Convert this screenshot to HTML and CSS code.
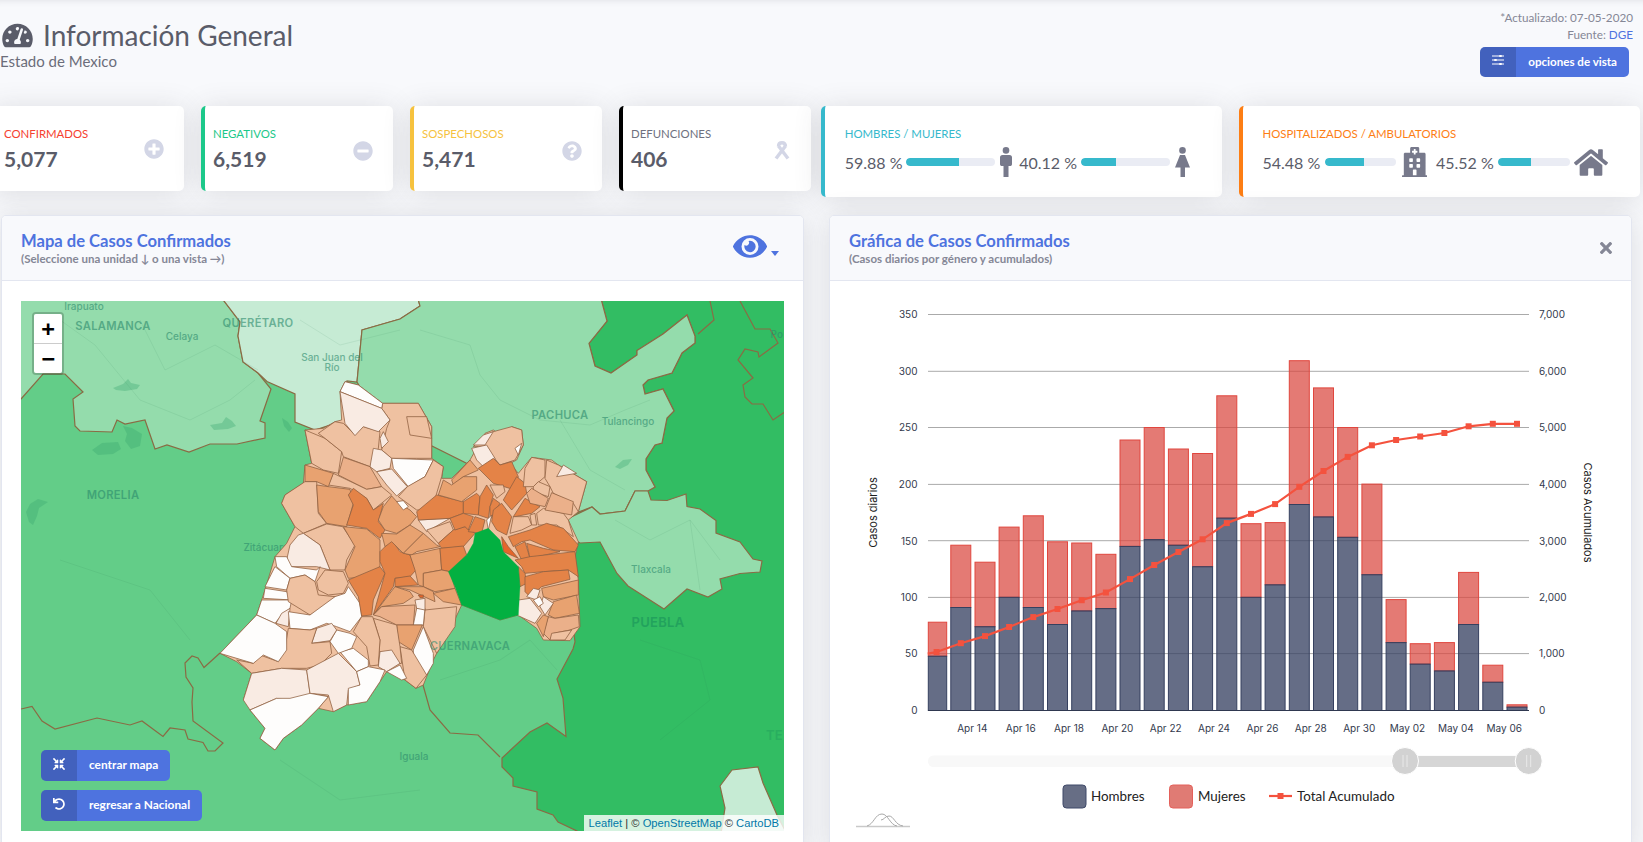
FILE: index.html
```html
<!DOCTYPE html>
<html lang="es">
<head>
<meta charset="utf-8">
<title>Información General</title>
<link rel="stylesheet" href="styles.css">
</head>
<body>
<header class="top">
  <div class="top-left">
    <div class="title-row">
      <svg class="gauge" viewBox="0 20 576 472"><path d="M288 32C128.94 32 0 160.94 0 320c0 52.8 14.25 102.26 39.06 144.8 5.61 9.62 16.3 15.2 27.44 15.2h443c11.14 0 21.83-5.58 27.44-15.2C561.75 422.26 576 372.8 576 320c0-159.06-128.94-288-288-288zm0 64c14.71 0 26.58 10.13 30.32 23.65-1.11 2.26-2.64 4.23-3.45 6.67l-9.22 27.67c-5.13 3.49-10.97 6.01-17.64 6.01-17.67 0-32-14.33-32-32S270.33 96 288 96zM96 384c-17.67 0-32-14.33-32-32s14.33-32 32-32 32 14.33 32 32-14.33 32-32 32zm48-160c-17.67 0-32-14.33-32-32s14.33-32 32-32 32 14.33 32 32-14.33 32-32 32zm246.77-72.41l-61.33 184C343.13 347.33 352 364.54 352 384c0 11.72-3.38 22.55-8.88 32H232.88c-5.5-9.45-8.88-20.28-8.88-32 0-33.94 26.5-61.43 59.9-63.59l61.34-184.01c4.17-12.56 17.73-19.45 30.36-15.17 12.57 4.19 19.35 17.77 15.17 30.36zm14.66 57.2l15.52-46.55c3.47-1.29 7.13-2.23 11.05-2.23 17.67 0 32 14.33 32 32s-14.33 32-32 32c-11.38-.01-20.89-6.28-26.57-15.22zM480 384c-17.67 0-32-14.33-32-32s14.33-32 32-32 32 14.33 32 32-14.33 32-32 32z"/></svg>
      <h1>Información General</h1>
    </div>
    <div class="subtitle">Estado de Mexico</div>
  </div>
  <div class="top-right">
    <div class="meta">*Actualizado: 07-05-2020</div>
    <div class="meta">Fuente: <a href="#">DGE</a></div>
    <a class="btn btn-opts" href="#">
      <span class="btn-ico"><svg viewBox="0 0 12 10" class="ico-sliders"><path class="sl-l" d="M0 1h12M0 5h12M0 9h12"/><path class="sl-t" d="M8.500 0v2M3.500 4v2M8.500 8v2"/></svg></span>
      <span class="btn-txt">opciones de vista</span>
    </a>
  </div>
</header>

<section class="stats">
  <article class="stat small s-red">
    <div class="stat-text"><div class="stat-label">CONFIRMADOS</div><div class="stat-value">5,077</div></div>
    <svg class="stat-ico up" viewBox="0 0 512 512"><path d="M256 8C119 8 8 119 8 256s111 248 248 248 248-111 248-248S393 8 256 8zm144 276c0 6.6-5.4 12-12 12h-92v92c0 6.6-5.4 12-12 12h-56c-6.6 0-12-5.4-12-12v-92h-92c-6.6 0-12-5.4-12-12v-56c0-6.6 5.4-12 12-12h92v-92c0-6.6 5.4-12 12-12h56c6.6 0 12 5.4 12 12v92h92c6.6 0 12 5.4 12 12v56z"/></svg>
  </article>
  <article class="stat small s-green">
    <div class="stat-text"><div class="stat-label">NEGATIVOS</div><div class="stat-value">6,519</div></div>
    <svg class="stat-ico" viewBox="0 0 512 512"><path d="M256 8C119 8 8 119 8 256s111 248 248 248 248-111 248-248S393 8 256 8zM124 296c-6.6 0-12-5.4-12-12v-56c0-6.6 5.4-12 12-12h264c6.6 0 12 5.4 12 12v56c0 6.6-5.4 12-12 12H124z"/></svg>
  </article>
  <article class="stat small s-yellow">
    <div class="stat-text"><div class="stat-label">SOSPECHOSOS</div><div class="stat-value">5,471</div></div>
    <svg class="stat-ico" viewBox="0 0 512 512"><path d="M504 256c0 136.997-111.043 248-248 248S8 392.997 8 256C8 119.083 119.043 8 256 8s248 111.083 248 248zM262.655 90c-54.497 0-89.255 22.957-116.549 63.758-3.536 5.286-2.353 12.415 2.715 16.258l34.699 26.31c5.205 3.947 12.621 3.008 16.665-2.122 17.864-22.658 30.113-35.797 57.303-35.797 20.429 0 45.698 13.148 45.698 32.958 0 14.976-12.363 22.667-32.534 33.976C247.128 238.528 216 254.941 216 296v4c0 6.627 5.373 12 12 12h56c6.627 0 12-5.373 12-12v-1.333c0-28.462 83.186-29.647 83.186-106.667 0-58.002-60.165-102-116.531-102zM256 338c-25.365 0-46 20.635-46 46 0 25.364 20.635 46 46 46s46-20.636 46-46c0-25.365-20.635-46-46-46z"/></svg>
  </article>
  <article class="stat small s-black">
    <div class="stat-text"><div class="stat-label">DEFUNCIONES</div><div class="stat-value">406</div></div>
    <svg class="stat-ico ribbon" viewBox="0 0 18 20"><path d="M5.500 5.500Q5.500 1.800 9 1.800T12.500 5.500"/><path d="M12.500 5 3 17.500"/><path d="M5.500 5 15 17.500"/></svg>
  </article>
  <article class="stat wide s-cyan">
    <div class="stat-label">HOMBRES / MUJERES</div>
    <div class="share-row">
      <span class="pct">59.88 %</span>
      <span class="bar bar-g"><span class="fill fill-60"></span></span>
      <svg class="person" viewBox="0 0 12 30"><circle cx="6" cy="3.400" r="3.300"/><path d="M2.500 8h7A2.500 2.500 0 0 1 12 10.500V17a2 2 0 0 1-2.500 2L8.500 19v11h-5V19L2.500 19A2 2 0 0 1 0 17v-6.500A2.500 2.500 0 0 1 2.500 8z"/></svg>
      <span class="pct pct-2">40.12 %</span>
      <span class="bar bar-g2"><span class="fill fill-41"></span></span>
      <svg class="person woman" viewBox="0 0 15 30"><circle cx="7.500" cy="3.400" r="3.300"/><path d="M5 8h5l5 12.500H10V30H5.500V20.500H0z"/></svg>
    </div>
  </article>
  <article class="stat wide s-orange">
    <div class="stat-label">HOSPITALIZADOS / AMBULATORIOS</div>
    <div class="share-row">
      <span class="pct pct-h">54.48 %</span>
      <span class="bar bar-h"><span class="fill fill-55"></span></span>
      <svg class="hospital" viewBox="0 0 448 512" preserveAspectRatio="none"><path d="M448 492v20H0v-20c0-6.627 5.373-12 12-12h20V120c0-13.255 10.745-24 24-24h88V24c0-13.255 10.745-24 24-24h112c13.255 0 24 10.745 24 24v72h88c13.255 0 24 10.745 24 24v360h20c6.627 0 12 5.373 12 12zM308 192h-40c-6.627 0-12 5.373-12 12v40c0 6.627 5.373 12 12 12h40c6.627 0 12-5.373 12-12v-40c0-6.627-5.373-12-12-12zm-168 64h40c6.627 0 12-5.373 12-12v-40c0-6.627-5.373-12-12-12h-40c-6.627 0-12 5.373-12 12v40c0 6.627 5.373 12 12 12zm104 128h-40c-6.627 0-12 5.373-12 12v84h64v-84c0-6.627-5.373-12-12-12zm64-96h-40c-6.627 0-12 5.373-12 12v40c0 6.627 5.373 12 12 12h40c6.627 0 12-5.373 12-12v-40c0-6.627-5.373-12-12-12zm-116 12c0-6.627-5.373-12-12-12h-40c-6.627 0-12 5.373-12 12v40c0 6.627 5.373 12 12 12h40c6.627 0 12-5.373 12-12v-40zM182 96h26v26a6 6 0 0 0 6 6h20a6 6 0 0 0 6-6V96h26a6 6 0 0 0 6-6V70a6 6 0 0 0-6-6h-26V38a6 6 0 0 0-6-6h-20a6 6 0 0 0-6 6v26h-26a6 6 0 0 0-6 6v20a6 6 0 0 0 6 6z"/></svg>
      <span class="pct pct-3">45.52 %</span>
      <span class="bar bar-h2"><span class="fill fill-46"></span></span>
      <svg class="home" viewBox="0 32 576 448"><path d="M280.37 148.26L96 300.11V464a16 16 0 0 0 16 16l112.06-.29a16 16 0 0 0 15.92-16V368a16 16 0 0 1 16-16h64a16 16 0 0 1 16 16v95.64a16 16 0 0 0 16 16.05L464 480a16 16 0 0 0 16-16V300L295.67 148.26a12.19 12.19 0 0 0-15.3 0zM571.6 251.47L488 182.56V44.05a12 12 0 0 0-12-12h-56a12 12 0 0 0-12 12v72.61L318.47 43a48 48 0 0 0-61 0L4.34 251.47a12 12 0 0 0-1.6 16.9l25.5 31A12 12 0 0 0 45.15 301l235.22-193.74a12.19 12.19 0 0 1 15.3 0L530.9 301a12 12 0 0 0 16.9-1.6l25.5-31a12 12 0 0 0-1.7-16.93z"/></svg>
    </div>
  </article>
</section>

<main class="panels">
  <section class="panel panel-map">
    <div class="panel-head">
      <div>
        <h2>Mapa de Casos Confirmados</h2>
        <p>(Seleccione una unidad ↓ o una vista →)</p>
      </div>
      <div class="eye-wrap">
        <svg class="eye" viewBox="0 64 576 384"><path d="M572.52 241.4C518.29 135.59 410.93 64 288 64S57.680 135.640 3.480 241.410a32.350 32.350 0 0 0 0 29.190C57.710 376.410 165.070 448 288 448s230.320-71.640 284.520-177.410a32.350 32.350 0 0 0 0-29.190zM288 400a144 144 0 1 1 144-144 143.930 143.930 0 0 1-144 144zm0-240a95.310 95.310 0 0 0-25.310 3.790 47.850 47.850 0 0 1-66.900 66.900A95.780 95.780 0 1 0 288 160z"/></svg>
        <span class="caret"></span>
      </div>
    </div>
    <div class="panel-body map-body">
      <div class="map">
        <svg class="map-svg" viewBox="21 301 763 530">
          <rect class="r-mid" x="21" y="301" width="763" height="530"/>
          <polygon class="r-dark st" points="600,295 607,321 589,343.500 595,366 611,373 637,355 637,350.500 663,334 687,315 695,336 695,343 682,353 672,373 648,380 643,385 645,394 663,389 674,411 667,418 662,443 655,445 646,459 646,470 655,487 648,491 635,491 625,511 600,514 592,507 573,514 560,530 565,560 570,600 575,642 573,649 557,679 563,698 566,736.500 547,723 530,732 502,758 502,767 513,778 513,786 537,792 537,809 553,815 558,822 577,831 580,840 790,840 790,295"/>
          <polygon class="r-light st" points="21,399 43,374 65,374 83,392 73,399 75,426 80,431 112,432 117,420 125,424 145,420 155,449 167,445 189,452 210,444 237,444 265,438 265,423 260,421 271,389 258,373 243,362 238,336 240,322 224,301 220,295 15,295 15,399"/>
          <polygon class="r-pale st" points="224,301 240,322 238,336 243,362 258,373 267,381.500 295,394 295,422 315,430 345,420 345,396 347,381 357,382 362,330 400,319 420,306 417,295 220,295"/>
          <polygon class="r-light st" points="362,330 400,319 420,306 417,295 600,295 607,321 589,343.500 595,366 611,373 637,355 637,350.500 663,334 687,315 695,336 695,343 682,353 672,373 648,380 643,385 645,394 663,389 674,411 667,418 662,443 655,445 646,459 646,470 655,487 648,491 635,491 625,511 600,514 592,507 573,514 540,520 500,480 380,420 357,382"/>
          <polygon class="r-light st" points="567,519 592,507 600,514 625,511 635,491 648,491 651,500 667,500.500 686,494 687,506.500 700,509 716,520.600 716,533 740,542 753,559 762,561 760,572 740,573.500 720,579 722,589 708,597 687,589 664,609 628,586 617,573.500 600,542 580,543 575,540"/>
          <polygon class="r-pale st" points="720,786 732,770 758,767 763,783 777,815 790,840 720,840 725,808"/>
          <polyline class="line" points="21,709 32,706.500 42,721 55,729 97,718 130,725 142,721 163,736.500 170,728 185,730 188,739 203,742.500 208,751 215,751 223,743 193,721 192,702 193,688 186,677 185,663 192,656 198,658 204,667.500 220,653"/>
          <polyline class="line" points="423,685 430,710 450,733 478,735 500,757"/>
          <polyline class="line" points="710,301 714,320 698,334"/>
          <polyline class="line" points="740,301 755,329 770,329 778,343 759,357 758,352 745,349 738,360 753,378 743,385 745,397 752,404 763,404 773,420 784,412.500"/>
          <g class="roads">
            <polyline points="60,320 95,345 140,400 190,420 230,400 255,380"/>
            <polyline points="140,320 165,370 215,345 258,370"/>
            <polyline points="420,330 470,345 480,375 500,400 540,420 590,425 625,410 650,400"/>
            <polyline points="560,420 590,470 625,490"/>
            <polyline points="615,520 650,540 690,520 720,560"/>
            <polyline points="690,520 700,590"/>
            <polyline points="440,680 500,660 530,640 557,670"/>
            <polyline points="60,560 150,590 190,640"/>
            <polyline points="280,760 340,800 420,790"/>
            <polyline points="640,640 700,660 710,700 660,740"/>
            <polyline points="300,320 340,345 400,330"/>
          </g>
          <g class="lakes">
            <path d="M113 388l10-4 5-5 3 4 9 2-3 4-12 2-9-1z"/>
            <path d="M123 426l9 2 10 6-2 12-9 3-6-8 2-7z"/>
            <path d="M92 450l10-7 16-1 3 7-8 5-15 1z"/>
            <path d="M26 512l4-8 8-5 10 3-9 6-2 8-4 9-4-3z"/>
            <path d="M210 425l12-2 4-6 6 4 4 5-8 3-14 1z"/>
            <path d="M615 467l8-7 9-1-4 6-8 4z"/>
            <path d="M282 418l6 4 4 6-3 4-5-6z"/>
          </g>
          <g class="labels">
            <text class="lb-s" x="84" y="310">Irapuato</text>
            <text class="lb-b" x="113" y="330">SALAMANCA</text>
            <text class="lb-s" x="182" y="340">Celaya</text>
            <text class="lb-b" x="258" y="327">QUERÉTARO</text>
            <text class="lb-s" x="332" y="361">San Juan del</text>
            <text class="lb-s" x="332" y="371">Río</text>
            <text class="lb-b" x="113" y="499">MORELIA</text>
            <text class="lb-s" x="266" y="551">Zitácuaro</text>
            <text class="lb-b" x="560" y="419">PACHUCA</text>
            <text class="lb-s" x="628" y="425">Tulancingo</text>
            <text class="lb-s" x="651" y="573">Tlaxcala</text>
            <text class="lb-b lb-dk" x="658" y="627">PUEBLA</text>
            <text class="lb-s" x="414" y="760">Iguala</text>
            <text class="lb-s lb-end" x="783" y="338">Po</text>
            <text class="lb-b lb-dk lb-end" x="783" y="740">TE</text>
          </g>
          <g class="muni" transform="translate(210 370) scale(.33333)">
            <polygon class="c" points="405,35 445,45 518,100 625,100 665,170 665,265 700,290 695,325 725,325 780,270 825,190 850,180 885,205 905,170 935,180 940,225 920,270 900,280 925,310 965,262 1025,270 1045,285 1130,335 1105,425 1075,450 1105,515 1095,560 1105,630 1110,770 1080,812 1000,810 980,775 925,735 870,750 755,705 720,780 680,850 670,870 640,945 618,955 585,930 530,905 510,935 470,995 410,1005 370,1025 325,1015 275,1065 220,1105 195,1140 150,1105 165,1075 120,1020 135,985 100,990 125,910 80,875 30,850 140,735 165,660 195,560 230,520 255,470 215,400 225,375 280,340 285,285 305,280 285,180 340,175 375,155 395,150 390,65"/>
            <polygon class="c" points="285,180 345,205 395,245 385,310 340,300 305,280"/>
            <polygon class="c" points="325,190 375,155 400,160 435,195 460,170 510,185 505,235 480,290 400,260 395,245 345,205"/>
            <polygon class="c" points="518,100 625,100 665,170 665,265 620,265 545,265 515,240 530,175 540,150 515,115"/>
            <polygon class="c" points="590,140 650,140 665,205 600,195"/>
            <polygon class="a" points="405,35 445,45 518,100 515,115 390,65"/>
            <polygon class="b" points="390,65 515,115 540,150 505,185 460,170 435,197 405,160"/>
            <polygon class="b" points="520,185 535,215 515,235 510,205"/>
            <polygon class="b" points="490,235 515,240 545,265 540,295 500,305 480,290"/>
            <polygon class="a" points="545,265 670,270 645,320 595,350 550,295"/>
            <polygon class="b" points="500,305 545,297 592,350 560,378 530,345"/>
            <polygon class="d" points="400,262 480,290 515,350 470,358 385,315"/>
            <polygon class="c" points="370,310 470,358 515,350 545,375 490,420 470,385 420,355 355,345"/>
            <polygon class="e" points="285,285 370,310 355,350 320,335 285,335"/>
            <polygon class="c" points="225,375 285,335 320,335 325,430 350,460 280,490 255,470 215,400"/>
            <polygon class="e" points="320,345 355,350 420,358 430,400 410,470 350,460 325,425"/>
            <polygon class="f" points="430,355 470,385 490,420 520,400 505,455 525,480 510,505 470,475 410,465 430,405 415,375"/>
            <polygon class="e" points="520,410 545,378 565,400 600,420 620,440 600,465 560,490 525,480 505,450"/>
            <polygon class="a" points="560,395 580,392 595,410 580,420"/>
            <polygon class="c" points="592,350 645,320 670,270 700,290 695,320 665,420 620,420 565,380"/>
            <polygon class="c" points="280,490 350,462 398,470 435,525 410,570 405,600 360,600 330,525"/>
            <polygon class="b" points="265,495 280,490 330,525 360,600 320,590 240,590 230,570 240,525"/>
            <polygon class="e" points="400,470 470,477 510,510 510,590 470,620 415,625 405,600 435,530"/>
            <polygon class="a" points="195,560 230,560 245,590 320,600 330,590 315,635 285,615 240,625 200,590"/>
            <polygon class="a" points="195,590 240,625 230,660 165,650"/>
            <polygon class="a" points="165,655 230,665 245,690 160,685"/>
            <polygon class="a" points="155,690 245,690 240,715 215,735 195,760 140,735"/>
            <polygon class="b" points="215,730 240,715 235,770 198,760"/>
            <polygon class="c" points="240,625 285,615 315,635 325,675 375,680 360,705 300,735 235,695 230,660"/>
            <polygon class="c" points="320,635 345,600 400,605 415,640 400,670 355,675 325,660"/>
            <polygon class="a" points="415,650 450,700 455,740 420,785 380,770 350,760 300,780 240,775 235,725 300,735 375,680 405,670"/>
            <polygon class="f" points="415,630 510,590 525,610 490,690 485,735 455,738 445,680"/>
            <polygon class="f" points="510,545 545,510 570,545 600,555 618,600 600,620 555,625 550,650 490,735 525,610 510,575"/>
            <polygon class="f" points="555,625 600,618 625,645 555,650"/>
            <polygon class="e" points="515,490 560,492 600,465 640,490 580,550 545,515 525,530"/>
            <polygon class="e" points="580,550 640,490 680,525 690,530 620,545 605,555"/>
            <polygon class="e" points="600,555 690,535 695,600 640,610 640,650 625,645 615,600"/>
            <polygon class="b" points="625,450 720,445 650,485"/>
            <polygon class="c" points="650,480 720,455 730,480 685,520"/>
            <polygon class="f" points="620,425 680,375 760,395 760,430 720,445 625,450"/>
            <polygon class="f" points="685,520 730,480 765,470 795,490 760,530 695,535"/>
            <polygon class="f" points="690,535 760,528 770,555 720,605 695,600"/>
            <polygon class="e" points="640,610 695,600 720,605 735,655 675,665 640,650"/>
            <polygon class="e" points="555,650 640,650 670,665 675,695 600,660"/>
            <polygon class="e" points="670,670 735,655 755,705 700,695"/>
            <polygon class="c" points="645,720 740,710 735,770 680,850 640,770"/>
            <polygon class="e" points="490,735 555,650 600,665 610,680 580,700 515,710"/>
            <polygon class="d" points="490,735 515,710 615,705 610,765 560,765 510,740"/>
            <polygon class="a" points="610,765 620,715 645,715 640,765"/>
            <polygon class="b" points="615,690 645,685 645,720 620,715"/>
            <polygon class="g" points="625,675 640,675 640,683 630,683"/>
            <polygon class="e" points="560,765 637,765 605,840 565,815"/>
            <polygon class="a" points="640,770 670,850 670,880 650,915 610,880 610,840"/>
            <polygon class="c" points="570,830 605,840 650,915 618,955 585,930"/>
            <polygon class="c" points="490,745 560,765 570,830 575,880 540,885 505,885 510,810"/>
            <polygon class="c" points="430,785 455,740 488,740 510,810 505,885 480,888 470,830"/>
            <polygon class="b" points="510,845 545,840 570,880 530,905 505,890"/>
            <polygon class="a" points="530,905 570,885 590,925 575,930"/>
            <polygon class="a" points="390,845 430,835 475,870 475,890 440,905"/>
            <polygon class="a" points="360,815 380,780 420,790 440,800 425,835 385,850"/>
            <polygon class="b" points="305,820 320,775 365,760 380,780 360,812"/>
            <polygon class="c" points="80,870 130,880 150,855 205,875 225,835 235,775 300,780 320,775 305,820 360,815 365,850 330,885 290,895 215,895 125,910"/>
            <polygon class="a" points="30,850 140,735 195,760 230,785 230,840 205,875 160,855 130,880"/>
            <polygon class="b" points="125,910 215,895 290,900 300,970 355,980 325,1015 270,1000 200,985 120,1020 100,990"/>
            <polygon class="b" points="290,900 385,850 440,905 450,945 415,960 410,1005 370,1025 355,975 300,970"/>
            <polygon class="a" points="440,905 475,890 525,900 510,935 470,995 415,1005 415,955 450,945"/>
            <polygon class="a" points="120,1020 200,985 240,985 300,970 355,980 325,1015 275,1065 220,1105 195,1140 150,1105 165,1075"/>
            <polygon class="c" points="790,230 815,205 850,185 905,170 935,180 940,225 915,270 870,285 850,260 830,230"/>
            <polygon class="b" points="785,235 830,225 855,265 825,295 800,270"/>
            <polygon class="b" points="790,225 820,195 850,185 825,225"/>
            <polygon class="a" points="915,235 935,220 925,255"/>
            <polygon class="f" points="805,295 850,265 870,285 905,275 925,320 915,360 850,340"/>
            <polygon class="e" points="725,330 780,270 805,300 760,320 730,345"/>
            <polygon class="e" points="685,375 700,330 725,345 760,320 800,320 800,360 755,395"/>
            <polygon class="f" points="760,395 800,370 810,380 805,435 760,430"/>
            <polygon class="f" points="720,445 760,430 790,440 775,480 765,470 735,480"/>
            <polygon class="f" points="795,440 825,450 815,490 775,485"/>
            <polygon class="f" points="810,380 830,345 850,375 840,410 835,445 805,435"/>
            <polygon class="c" points="840,345 880,345 885,365 860,385"/>
            <polygon class="f" points="850,385 870,400 840,450 840,410"/>
            <polygon class="a" points="830,450 845,435 835,480"/>
            <polygon class="f" points="850,420 875,400 905,440 890,495 860,480 845,455"/>
            <polygon class="f" points="880,390 920,320 945,340 950,370 905,420"/>
            <polygon class="f" points="910,440 945,385 990,410 965,430 915,440"/>
            <polygon class="c" points="900,490 910,440 955,440 965,465 935,480"/>
            <polygon class="c" points="960,435 975,430 980,465 965,465"/>
            <polygon class="c" points="980,430 1000,415 1060,430 1075,450 1090,500 1040,465 985,465"/>
            <polygon class="c" points="940,350 945,295 965,262 1005,270 1005,320 970,350"/>
            <polygon class="c" points="1010,270 1045,285 1130,335 1105,425 1090,400 1030,370 1020,350 1005,325"/>
            <polygon class="b" points="1040,320 1060,285 1100,310"/>
            <polygon class="c" points="970,350 985,335 1020,350 1015,380 970,365"/>
            <polygon class="d" points="950,370 965,355 1015,385 1005,410 960,400"/>
            <polygon class="d" points="1005,420 1025,368 1090,395 1085,435"/>
            <polygon class="f" points="895,500 960,480 1010,460 1060,475 1105,525 1095,545 1030,540 960,510 935,515 910,530"/>
            <polygon class="f" points="915,530 945,515 960,565 935,570"/>
            <polygon class="f" points="950,520 1000,535 1050,545 960,565"/>
            <polygon class="g" points="875,500 895,530 925,565 880,545"/>
            <polygon class="f" points="915,570 960,560 1095,545 1105,620 1075,600 1000,605 945,610 935,590"/>
            <polygon class="f" points="925,590 945,610 950,640 930,650"/>
            <polygon class="f" points="945,620 1000,605 1075,600 1080,628 995,650 960,680 945,665"/>
            <polygon class="e" points="995,655 1105,630 1105,675 1030,690 1000,680"/>
            <polygon class="e" points="1030,695 1100,675 1108,730 1035,745 1015,735"/>
            <polygon class="d" points="1015,740 1035,745 1105,735 1108,770 1080,780 1030,790 1020,810 1000,790"/>
            <polygon class="c" points="1025,790 1085,780 1065,810 1020,810"/>
            <polygon class="e" points="980,760 1000,735 1015,740 1000,800"/>
            <polygon class="b" points="1000,680 1030,700 1005,735 990,710"/>
            <polygon class="b" points="950,680 970,655 990,660 980,690"/>
            <polygon class="a" points="970,690 990,680 1000,700 985,710"/>
            <polygon class="b" points="925,690 960,685 995,730 975,760 920,735"/>
            <polygon class="h" points="795,490 835,475 870,510 880,545 925,590 930,650 925,735 870,750 755,705 735,650 715,605 770,555 790,520"/>
          </g>
          <text class="lb-b lb-over" x="470" y="650">CUERNAVACA</text>
        </svg>
        <div class="zoom">
          <a href="#">+</a>
          <a href="#">−</a>
        </div>
        <div class="map-actions">
          <a class="btn btn-map" href="#">
            <span class="btn-ico"><svg class="ico-w" viewBox="0 0 512 512"><path d="M200 288H88c-21.4 0-32.1 25.8-17 41l32.900 31-99.200 99.300c-6.200 6.200-6.200 16.400 0 22.600l25.400 25.400c6.200 6.200 16.400 6.200 22.600 0L152 408l31.100 33c15.100 15.100 40.900 4.400 40.900-17V312c0-13.300-10.700-24-24-24zm112-64h112c21.400 0 32.100-25.900 17-41l-33-31 99.300-99.300c6.200-6.200 6.200-16.400 0-22.600L481.900 4.700c-6.200-6.200-16.400-6.200-22.600 0L360 104l-31.100-33C313.800 55.900 288 66.600 288 88v112c0 13.300 10.700 24 24 24zm96 136l33-31.100c15.100-15.100 4.400-40.900-17-40.900H312c-13.300 0-24 10.700-24 24v112c0 21.400 25.900 32.100 41 17l31-32.900 99.300 99.300c6.200 6.200 16.400 6.200 22.600 0l25.400-25.400c6.200-6.200 6.200-16.400 0-22.600L408 360zM183 71.100L152 104 52.700 4.700c-6.200-6.200-16.400-6.200-22.600 0L4.700 30.100c-6.200 6.200-6.200 16.400 0 22.600L104 152l-33 31.100C55.900 198.200 66.600 224 88 224h112c13.300 0 24-10.700 24-24V88c0-21.300-25.900-32-41-16.900z"/></svg></span>
            <span class="btn-txt">centrar mapa</span>
          </a>
          <a class="btn btn-map" href="#">
            <span class="btn-ico"><svg class="ico-w" viewBox="0 0 512 512"><path d="M212.333 224.333H12c-6.627 0-12-5.373-12-12V12C0 5.373 5.373 0 12 0h48c6.627 0 12 5.373 12 12v78.112C117.773 39.279 184.260 7.470 258.175 8.007c136.906.994 246.448 111.623 246.157 248.532C504.041 393.258 393.120 504 256.333 504c-64.089 0-122.496-24.313-166.510-64.215-5.099-4.622-5.334-12.554-.467-17.420l33.967-33.967c4.474-4.474 11.662-4.717 16.401-.525C170.760 415.336 211.580 432 256.333 432c97.268 0 176-78.716 176-176 0-97.267-78.716-176-176-176-58.496 0-110.280 28.476-142.274 72.333h98.274c6.627 0 12 5.373 12 12v48c0 6.627-5.373 12-12 12z"/></svg></span>
            <span class="btn-txt">regresar a Nacional</span>
          </a>
        </div>
        <div class="attrib"><a href="#">Leaflet</a> | © <a href="#">OpenStreetMap</a> © <a href="#">CartoDB</a></div>
      </div>
    </div>
  </section>

  <section class="panel panel-chart">
    <div class="panel-head">
      <div>
        <h2>Gráfica de Casos Confirmados</h2>
        <p>(Casos diarios por género y acumulados)</p>
      </div>
      <svg class="close" viewBox="0 88 352 336"><path d="M242.720 256l100.070-100.070c12.280-12.280 12.280-32.190 0-44.480l-22.240-22.240c-12.280-12.280-32.190-12.280-44.480 0L176 189.280 75.930 89.210c-12.280-12.280-32.190-12.280-44.480 0L9.210 111.450c-12.280 12.280-12.280 32.190 0 44.480L109.280 256 9.210 356.070c-12.280 12.280-12.280 32.190 0 44.480l22.240 22.240c12.280 12.280 32.200 12.280 44.480 0L176 322.720l100.070 100.070c12.280 12.280 32.200 12.280 44.480 0l22.240-22.240c12.280-12.280 12.280-32.190 0-44.480L242.720 256z"/></svg>
    </div>
    <div class="panel-body chart-body">
      <svg class="chart" viewBox="829 281 800 570">
        <defs>
          <marker id="sq" markerUnits="userSpaceOnUse" markerWidth="8" markerHeight="8" refX="4" refY="4"><rect class="sq" x="1" y="1" width="6" height="6"/></marker>
        </defs>
        <g class="grid">
          <line x1="927" x2="1528" y1="314.500" y2="314.500"/>
          <line x1="927" x2="1528" y1="371.300" y2="371.300"/>
          <line x1="927" x2="1528" y1="427.500" y2="427.500"/>
          <line x1="927" x2="1528" y1="484.400" y2="484.400"/>
          <line x1="927" x2="1528" y1="540.700" y2="540.700"/>
          <line x1="927" x2="1528" y1="597.400" y2="597.400"/>
          <line x1="927" x2="1528" y1="653.600" y2="653.600"/>
        </g>
        <g class="yl">
          <text x="916.500" y="318">350</text><text x="916.500" y="375">300</text><text x="916.500" y="431">250</text><text x="916.500" y="488">200</text><text x="916.500" y="544.500">150</text><text x="916.500" y="601">100</text><text x="916.500" y="657">50</text><text x="916.500" y="714">0</text>
        </g>
        <g class="yr">
          <text x="1538" y="318">7,000</text><text x="1538" y="375">6,000</text><text x="1538" y="431">5,000</text><text x="1538" y="488">4,000</text><text x="1538" y="544.500">3,000</text><text x="1538" y="601">2,000</text><text x="1538" y="657">1,000</text><text x="1538" y="714">0</text>
        </g>
        <g class="women">
          <rect x="927.300" y="622.200" width="18.400" height="34"/>
          <rect x="949.800" y="545.200" width="20" height="62.300"/>
          <rect x="974" y="562.200" width="20" height="64.500"/>
          <rect x="998.100" y="527.100" width="20" height="70.200"/>
          <rect x="1022.300" y="515.800" width="20" height="91.700"/>
          <rect x="1046.500" y="541.800" width="20" height="82.700"/>
          <rect x="1070.700" y="543" width="20" height="67.900"/>
          <rect x="1094.900" y="554.300" width="20" height="54.300"/>
          <rect x="1119" y="440" width="20" height="106.400"/>
          <rect x="1143.200" y="427.500" width="20" height="112.100"/>
          <rect x="1167.400" y="449" width="20" height="96.200"/>
          <rect x="1191.600" y="453.500" width="20" height="113.200"/>
          <rect x="1215.800" y="395.800" width="20" height="122.300"/>
          <rect x="1240" y="523.700" width="20" height="73.600"/>
          <rect x="1264.100" y="522.600" width="20" height="62.200"/>
          <rect x="1288.300" y="360.700" width="20" height="143.800"/>
          <rect x="1312.500" y="387.900" width="20" height="129"/>
          <rect x="1336.700" y="427.500" width="20" height="109.800"/>
          <rect x="1360.900" y="484.100" width="20" height="90.600"/>
          <rect x="1385.100" y="599.600" width="20" height="43"/>
          <rect x="1409.200" y="643.700" width="20" height="20.400"/>
          <rect x="1433.400" y="642.600" width="20" height="28.300"/>
          <rect x="1457.600" y="572.400" width="20" height="52.100"/>
          <rect x="1481.800" y="665.200" width="20" height="17"/>
          <rect x="1506" y="704.800" width="20" height="2.300"/>
        </g>
        <g class="men">
          <rect x="927.300" y="656.200" width="18.400" height="54.300"/>
          <rect x="949.800" y="607.500" width="20" height="103"/>
          <rect x="974" y="626.700" width="20" height="83.800"/>
          <rect x="998.100" y="597.300" width="20" height="113.200"/>
          <rect x="1022.300" y="607.500" width="20" height="103"/>
          <rect x="1046.500" y="624.500" width="20" height="86"/>
          <rect x="1070.700" y="610.900" width="20" height="99.600"/>
          <rect x="1094.900" y="608.600" width="20" height="101.900"/>
          <rect x="1119" y="546.400" width="20" height="164.100"/>
          <rect x="1143.200" y="539.600" width="20" height="170.900"/>
          <rect x="1167.400" y="545.200" width="20" height="165.300"/>
          <rect x="1191.600" y="566.700" width="20" height="143.800"/>
          <rect x="1215.800" y="518.100" width="20" height="192.400"/>
          <rect x="1240" y="597.300" width="20" height="113.200"/>
          <rect x="1264.100" y="584.800" width="20" height="125.700"/>
          <rect x="1288.300" y="504.500" width="20" height="206"/>
          <rect x="1312.500" y="516.900" width="20" height="193.600"/>
          <rect x="1336.700" y="537.300" width="20" height="173.200"/>
          <rect x="1360.900" y="574.700" width="20" height="135.800"/>
          <rect x="1385.100" y="642.600" width="20" height="67.900"/>
          <rect x="1409.200" y="664.100" width="20" height="46.400"/>
          <rect x="1433.400" y="670.900" width="20" height="39.600"/>
          <rect x="1457.600" y="624.500" width="20" height="86"/>
          <rect x="1481.800" y="682.200" width="20" height="28.300"/>
          <rect x="1506" y="707.100" width="20" height="3.400"/>
        </g>
        <line class="base" x1="927" x2="1528" y1="710.500" y2="710.500"/>
        <polyline class="total" points="926.700,653.600 935.600,652 959.800,643.200 984,636.100 1008.100,627 1032.300,617.100 1056.500,609 1080.700,600.200 1104.900,592.500 1129,579.100 1153.200,565 1177.400,552 1201.600,539.300 1225.800,523.100 1250,513.900 1274.100,504.100 1298.300,486.800 1322.500,471 1346.700,456.900 1370.900,445.300 1395.100,440 1419.200,436.500 1443.400,433 1467.600,426.300 1491.800,423.800 1516,423.800"/>
        <g class="xl">
          <text x="971.300" y="731.500">Apr 14</text><text x="1019.700" y="731.500">Apr 16</text><text x="1068" y="731.500">Apr 18</text><text x="1116.400" y="731.500">Apr 20</text><text x="1164.700" y="731.500">Apr 22</text><text x="1213.100" y="731.500">Apr 24</text><text x="1261.500" y="731.500">Apr 26</text><text x="1309.800" y="731.500">Apr 28</text><text x="1358.200" y="731.500">Apr 30</text><text x="1406.500" y="731.500">May 02</text><text x="1454.900" y="731.500">May 04</text><text x="1503.300" y="731.500">May 06</text>
        </g>
        <text class="axis-t" transform="translate(876 512.500) rotate(-90)">Casos diarios</text>
        <text class="axis-t" transform="translate(1583 512.500) rotate(90)">Casos Acumulados</text>
        <rect class="sb-track" x="927" y="755.500" width="600" height="11.500" rx="5.500"/>
        <rect class="sb-sel" x="1404" y="756" width="123" height="11"/>
        <g class="grip"><circle cx="1404" cy="761" r="13.500"/><path d="M1402 755v12M1406 755v12"/></g>
        <g class="grip"><circle cx="1527.700" cy="761" r="13.500"/><path d="M1525.700 755v12M1529.700 755v12"/></g>
        <rect class="lg-m" x="1062" y="785" width="23" height="23" rx="3.500"/>
        <text class="lg-t" x="1090" y="801">Hombres</text>
        <rect class="lg-w" x="1168.500" y="785" width="23" height="23" rx="3.500"/>
        <text class="lg-t" x="1197" y="801">Mujeres</text>
        <line class="lg-l" x1="1268" x2="1291" y1="796" y2="796"/>
        <rect class="sq" x="1276.500" y="793" width="6" height="6"/>
        <text class="lg-t" x="1296" y="801">Total Acumulado</text>
        <g class="amlogo"><path class="am1" d="M855 826.500h54"/><path class="am2" d="M866 826c7-2 8-12 15-12 6 0 8 11 15 12"/><path class="am2" d="M880 820c3 0 4-4 8-4 5 0 6 9 14 10"/></g>
      </svg>
    </div>
  </section>
</main>
</body>
</html>
```

FILE: styles.css
```css
* { box-sizing: border-box; }
html, body { margin: 0; height: 100%; overflow: hidden; }
body {
  background: #f8f9fc;
  color: #5a5c69;
  font-family: Lato, "Open Sans", "Liberation Sans", sans-serif;
  font-size: 14px;
}
a { text-decoration: none; color: inherit; }
h1, h2, p { margin: 0; font-weight: 400; }

/* header */
.top {
  height: 106px;
  display: flex;
  justify-content: space-between;
  box-shadow: inset 0 7px 7px -7px rgba(58, 59, 69, .14);
}
.top-left { padding-top: 18px; }
.title-row { display: flex; align-items: center; gap: 10px; height: 34px; padding-left: 2px; }
.gauge { width: 31px; height: 25px; fill: #5a5c69; }
h1 { font-size: 28px; line-height: 34px; color: #5a5c69; }
.subtitle { font-size: 15px; line-height: 19px; color: #6b6d7a; }
.top-right { padding: 9px 10px 0 0; text-align: right; display: flex; flex-direction: column; align-items: flex-end; }
.meta { font-size: 11.700px; line-height: 16.500px; color: #858796; }
.meta a { color: #4e73df; }

/* buttons */
.btn {
  display: inline-flex;
  align-items: stretch;
  background: #4e73df;
  color: #fff;
  border-radius: 5px;
  font-size: 11.900px;
  font-weight: 700;
  height: 30px;
  overflow: hidden;
}
.btn-ico { width: 36px; background: rgba(0, 0, 0, .15); display: flex; align-items: center; justify-content: center; padding-bottom: 4px; }
.btn-txt { padding: 0 12px 2px; display: flex; align-items: center; }
.btn-opts { margin: 5px 4px 0 0; font-size: 11.600px; }
.ico-sliders { width: 12px; height: 10px; fill: none; stroke: #fff; }
.sl-l { stroke-width: 1; }
.sl-t { stroke-width: 2.400; }
.ico-w { width: 12px; height: 12px; fill: #fff; }

/* stat cards */
.stats { display: flex; align-items: flex-start; gap: 17px; margin-left: -8px; width: 1660px; }
.stat {
  background: #fff;
  border-left: 4px solid;
  border-radius: 5px;
  box-shadow: 0 2px 28px rgba(58, 59, 69, .15);
  padding-top: 19px;
}
.small { width: 192px; height: 85px; padding-left: 8px; padding-right: 20px; display: flex; justify-content: space-between; }
.wide { width: 401px; height: 91px; padding-left: 19.700px; }
.s-cyan { margin-left: -7px; }
.s-red { border-color: #e74a3b; }
.s-green { border-color: #1cc88a; }
.s-yellow { border-color: #f6c23e; }
.s-black { border-color: #000; }
.s-cyan { border-color: #36b9cc; }
.s-orange { border-color: #fd7e14; }
.s-orange.wide { padding-left: 19.500px; }
.stat-label { font-size: 11.400px; line-height: 18px; font-weight: 400; }
.s-red .stat-label { color: #f5402f; }
.s-green .stat-label { color: #1cc88a; }
.s-yellow .stat-label { color: #f6c23e; }
.s-black .stat-label { color: #6e707e; }
.s-cyan .stat-label { color: #36b9cc; }
.s-orange .stat-label { color: #fd7e14; }
.stat-value { margin-top: 4px; font-size: 21px; line-height: 24px; font-weight: 700; color: #5a5c69; }
.stat-ico { width: 20px; height: 20px; fill: #d3d6e6; margin-top: 16px; flex: none; }
.stat-ico.up { margin-top: 14px; }
.ribbon { width: 18px; fill: none; stroke: #d3d6e6; stroke-width: 3.400; }

.share-row { display: flex; align-items: center; height: 30px; margin-top: 4px; }
.pct { font-size: 16px; color: #5a5c69; flex: none; width: 61.300px; }
.pct-2 { margin-left: 7.500px; width: 61.500px; }
.pct-h { width: 62.500px; }
.pct-3 { margin-left: 9px; width: 62px; }
.bar { display: block; height: 8px; background: #eaecf4; border-radius: 4px; overflow: hidden; flex: none; }
.bar-g { width: 89px; }
.bar-g2 { width: 89.500px; }
.bar-h { width: 71px; }
.bar-h2 { width: 71.600px; }
.fill { display: block; height: 100%; background: #36b9cc; border-radius: 4px 0 0 4px; }
.fill-60 { width: 60%; }
.fill-41 { width: 40%; }
.fill-55 { width: 55%; }
.fill-46 { width: 46%; }
.person { width: 12px; height: 30px; fill: #77798b; margin-left: 4.700px; flex: none; }
.woman { width: 15px; }
.hospital { width: 25.400px; height: 30px; fill: #77798b; margin-left: 5.600px; flex: none; }
.home { width: 34px; height: 27px; fill: #77798b; margin-left: 4.400px; flex: none; }

/* panels */
.panels { display: flex; gap: 25px; margin-top: 18px; padding-left: 1px; }
.panel {
  background: #fff;
  border: 1px solid #e3e6f0;
  border-radius: 5px;
  box-shadow: 0 2px 28px rgba(58, 59, 69, .15);
  overflow: hidden;
}
.panel-map { width: 803px; }
.panel-chart { width: 803px; }
.panel-head {
  height: 65px;
  background: #f8f9fc;
  border-bottom: 1px solid #e3e6f0;
  padding: 15px 19px 0 19px;
  display: flex;
  justify-content: space-between;
  align-items: flex-start;
}
.panel-head h2 { font-size: 16.600px; line-height: 20px; font-weight: 700; color: #4e73df; }
.panel-head p { font-size: 11.500px; line-height: 13px; margin-top: 1px; color: #858796; font-weight: 700; }
.eye-wrap { display: flex; align-items: flex-end; gap: 4px; margin: 4px 5px 0 0; }
.eye { width: 34px; height: 23px; fill: #4e73df; }
.caret { border: 4.500px solid transparent; border-top: 5px solid #4e73df; border-bottom: 0; margin-bottom: 2px; }
.close { width: 12px; height: 12px; fill: #858796; margin: 11px 0 0 0; }
.panel-body { background: #fff; }
.map-body { padding: 20px 20px 20px 19px; }
.chart-body { height: 570px; }
.chart { display: block; width: 800px; height: 570px; font-family: Inter, Lato, sans-serif; }

/* map */
.map { position: relative; width: 763px; height: 530px; overflow: hidden; }
.map-svg { display: block; width: 763px; height: 530px; font-family: Inter, Lato, sans-serif; }
.r-mid { fill: #63cd88; }
.r-dark { fill: #32bd63; }
.r-light { fill: #94dcac; }
.r-pale { fill: #c6ebd4; }
.st { stroke: #8a6b44; stroke-width: 1.200; }
.line { fill: none; stroke: #8a6b44; stroke-width: 1.200; }
.roads polyline { fill: none; stroke: #2f7d55; stroke-width: .6; opacity: .18; }
.lakes path { fill: #3aa56f; opacity: .35; }
.labels text, .lb-over { text-anchor: middle; fill: #2c8a6c; opacity: .6; }
.labels .lb-end { text-anchor: end; }
.lb-s { font-size: 10px; font-weight: 500; }
.lb-b { font-size: 11.200px; font-weight: 600; letter-spacing: .3px; }
.labels .lb-dk { fill: #1f9c5c; opacity: .8; }
.labels .lb-b.lb-dk { font-size: 13px; }
.labels .lb-end.lb-dk { opacity: .45; }
.lb-over { opacity: .55; }
.muni polygon { stroke: #8f6040; stroke-width: 2.300; stroke-linejoin: round; }
.a { fill: #fefdfc; }
.b { fill: #f9ebe3; }
.c { fill: #efc1a1; }
.d { fill: #ebb08a; }
.e { fill: #e8a270; }
.f { fill: #e48347; }
.g { fill: #e5652a; }
.h { fill: #03b041; }
.muni .h { stroke: #03b041; stroke-width: 1; }

.zoom {
  position: absolute;
  left: 11px;
  top: 11px;
  width: 32px;
  border: 2px solid rgba(0, 0, 0, .2);
  border-radius: 4px;
  background-clip: padding-box;
}
.zoom a {
  display: block;
  height: 29px;
  line-height: 28px;
  background: #fff;
  color: #000;
  text-align: center;
  font: 700 22px/29px "DejaVu Sans Mono", "Liberation Mono", monospace;
}
.zoom a:first-child { border-bottom: 1px solid #ccc; height: 30px; border-radius: 2px 2px 0 0; }
.zoom a:last-child { border-radius: 0 0 2px 2px; }
.map-actions {
  position: absolute;
  left: 20px;
  bottom: 10px;
  display: flex;
  flex-direction: column;
  align-items: flex-start;
  gap: 9px;
}
.btn-map { height: 31px; }
.attrib {
  position: absolute;
  right: 0;
  bottom: 0;
  height: 16px;
  padding: 0 5px;
  background: rgba(255, 255, 255, .8);
  font: 11.200px/16px "Liberation Sans", sans-serif;
  color: #333;
}
.attrib a { color: #0078a8; }

/* chart */
.grid line { stroke: #aaa; stroke-width: 1; }
.yl text { font-size: 10px; text-anchor: end; fill: #333a4d; }
.yr text { font-size: 10px; fill: #333a4d; }
.xl text { font-size: 10px; text-anchor: middle; fill: #333a4d; }
.women rect { fill: #d9463e; fill-opacity: .72; stroke: #e0463e; stroke-width: 1; }
.men rect { fill: #3a4464; fill-opacity: .78; stroke: #36405f; stroke-width: 1; }
.base { stroke: #2f3850; stroke-width: 1; }
.total { fill: none; stroke: #f4523e; stroke-width: 2.200; marker-mid: url(#sq); marker-end: url(#sq); }
.sq { fill: #f4523e; }
.axis-t { font-size: 11px; text-anchor: middle; fill: #1c1c1c; }
.sb-track { fill: #f8f8f8; }
.sb-sel { fill: #d6d6d6; }
.grip circle { fill: #d2d2d2; stroke: #fff; stroke-width: 1; }
.grip path { stroke: #e9e9e9; stroke-width: 1; fill: none; }
.lg-m { fill: #676e85; stroke: #3f4968; stroke-width: 1; }
.lg-w { fill: #e07b74; stroke: #e4605a; stroke-width: 1; }
.lg-l { stroke: #f4523e; stroke-width: 2.200; }
.lg-t { font-family: Lato, sans-serif; font-size: 13.400px; fill: #222; }
.amlogo path { fill: none; }
.am1 { stroke: #c9c9c9; stroke-width: 1.500; }
.am2 { stroke: #a8a8a8; stroke-width: 1; }
```
